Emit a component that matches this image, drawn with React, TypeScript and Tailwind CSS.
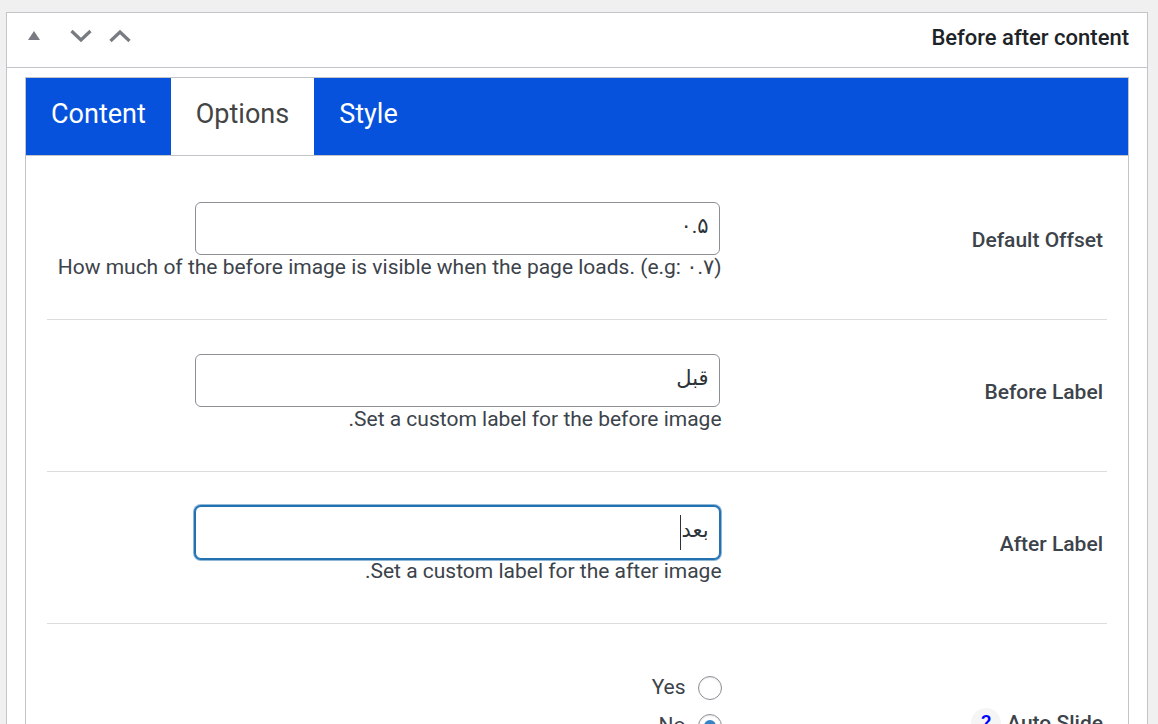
import type { ReactNode } from "react";
import { useState } from "react";

function Row({ label, htmlFor, children }: { label: ReactNode; htmlFor?: string; children: ReactNode }) {
  return (
    <div className="flex items-center border-b border-[#dcdcde] pt-[34px] pb-10">
      <div className="w-4/11 shrink-0 ps-1 pb-[2px] text-[21px] leading-[26px] font-medium">
        {htmlFor ? <label htmlFor={htmlFor}>{label}</label> : label}
      </div>
      <div className="min-w-0 flex-1">{children}</div>
    </div>
  );
}

function TextField({ id, initial, hint, active = false }: { id: string; initial: string; hint: string; active?: boolean }) {
  const [value, setValue] = useState(initial);
  return (
    <>
      <div className="relative mx-[2px] max-w-[525px]">
        <input
          id={id}
          type="text"
          value={value}
          onChange={(e) => setValue(e.target.value)}
          className={
            active
              ? "block h-[53px] w-full rounded-[6px] border border-[#2271b1] bg-white px-[10px] pb-[5px] text-[21px] text-[#2c3338] shadow-[0_0_0_1px_#2271b1,0_0_0_2px_#2271b180] outline-none"
              : "block h-[53px] w-full rounded-[6px] border border-[#8c8f94] bg-white px-[10px] pb-[5px] text-[21px] text-[#2c3338] outline-none"
          }
        />
        {active && <span className="absolute top-[9px] right-[39px] h-[35px] w-px bg-[#2c3338]" />}
      </div>
      <p className="text-[21px] leading-[24px]">{hint}</p>
    </>
  );
}

function Radio({ name, label, defaultChecked }: { name: string; label: string; defaultChecked?: boolean }) {
  return (
    <label className="flex h-[38px] items-center gap-3 text-[21px]">
      <input
        type="radio"
        name={name}
        defaultChecked={defaultChecked}
        className="grid size-6 appearance-none place-items-center rounded-full border border-[#8c8f94] bg-white shadow-[inset_0_1px_2px_rgba(0,0,0,0.1)] before:size-3 before:rounded-full before:content-[''] checked:before:bg-[#3582c4]"
      />
      {label}
    </label>
  );
}

const tabs = ["Content", "Options", "Style"];

export default function App() {
  return (
    <main
      dir="rtl"
      className="min-h-screen bg-[#f0f0f1] pt-3 pr-[10px] pl-[6px] font-['Roboto','DejaVu_Sans',sans-serif] text-[#3c434a]"
    >
      <section className="border border-[#c3c4c7] bg-white">
        <header className="flex h-[55px] items-center justify-between border-b border-[#c3c4c7] px-[18px] pb-[6px]">
          <h2 className="text-[22px] font-medium text-[#1d2327]">Before after content</h2>
          <div dir="ltr" className="flex items-center pb-[3px] text-[#787c82]">
            <button type="button" aria-label="Toggle panel" className="mr-[27px] flex size-[18px] items-center justify-center">
              <svg width="14" height="12" viewBox="0 0 14 12"><path d="M1 10L7 1L13 10Z" fill="currentColor" /></svg>
            </button>
            <button type="button" aria-label="Move down" className="mr-[17px]">
              <svg width="22" height="14" viewBox="0 0 22 14"><path d="M1.5 2L11 11L20.5 2" fill="none" stroke="currentColor" strokeWidth="3.2" /></svg>
            </button>
            <button type="button" aria-label="Move up">
              <svg width="22" height="14" viewBox="0 0 22 14"><path d="M1.5 12L11 3L20.5 12" fill="none" stroke="currentColor" strokeWidth="3.2" /></svg>
            </button>
          </div>
        </header>

        <div className="px-[18px] pt-[9px]">
          <div className="border border-[#c3c4c7]">
            <nav dir="ltr" className="flex h-[78px] border-b border-[#c3c4c7] bg-[#0652dd]">
              {tabs.map((tab) => (
                <button
                  key={tab}
                  type="button"
                  className={
                    tab === "Options"
                      ? "bg-white px-[25px] pb-1 text-[27px] text-[#444444]"
                      : "px-[25px] pb-1 text-[27px] text-white"
                  }
                >
                  {tab}
                </button>
              ))}
            </nav>

            <form className="px-[21px] pt-3">
              <Row label="Default Offset" htmlFor="offset">
                <TextField id="offset" initial="۰.۵" hint="How much of the before image is visible when the page loads. (e.g: ۰.۷)" />
              </Row>
              <Row label="Before Label" htmlFor="before">
                <TextField id="before" initial="قبل" hint="Set a custom label for the before image." />
              </Row>
              <Row label="After Label" htmlFor="after">
                <TextField id="after" initial="بعد" hint="Set a custom label for the after image." active />
              </Row>
              <Row
                label={
                  <span className="flex items-center gap-[6px]">
                    Auto Slide
                    <button type="button" aria-label="Help" className="grid size-[30px] place-items-center rounded-full bg-[#f5f5f5] text-[21px] font-medium text-[#0000ff]">
                      ?
                    </button>
                  </span>
                }
              >
                <div className="pt-[11px] pb-11">
                  <Radio name="auto-slide" label="Yes" />
                  <Radio name="auto-slide" label="No" defaultChecked />
                </div>
              </Row>
            </form>
          </div>
        </div>
      </section>
    </main>
  );
}
